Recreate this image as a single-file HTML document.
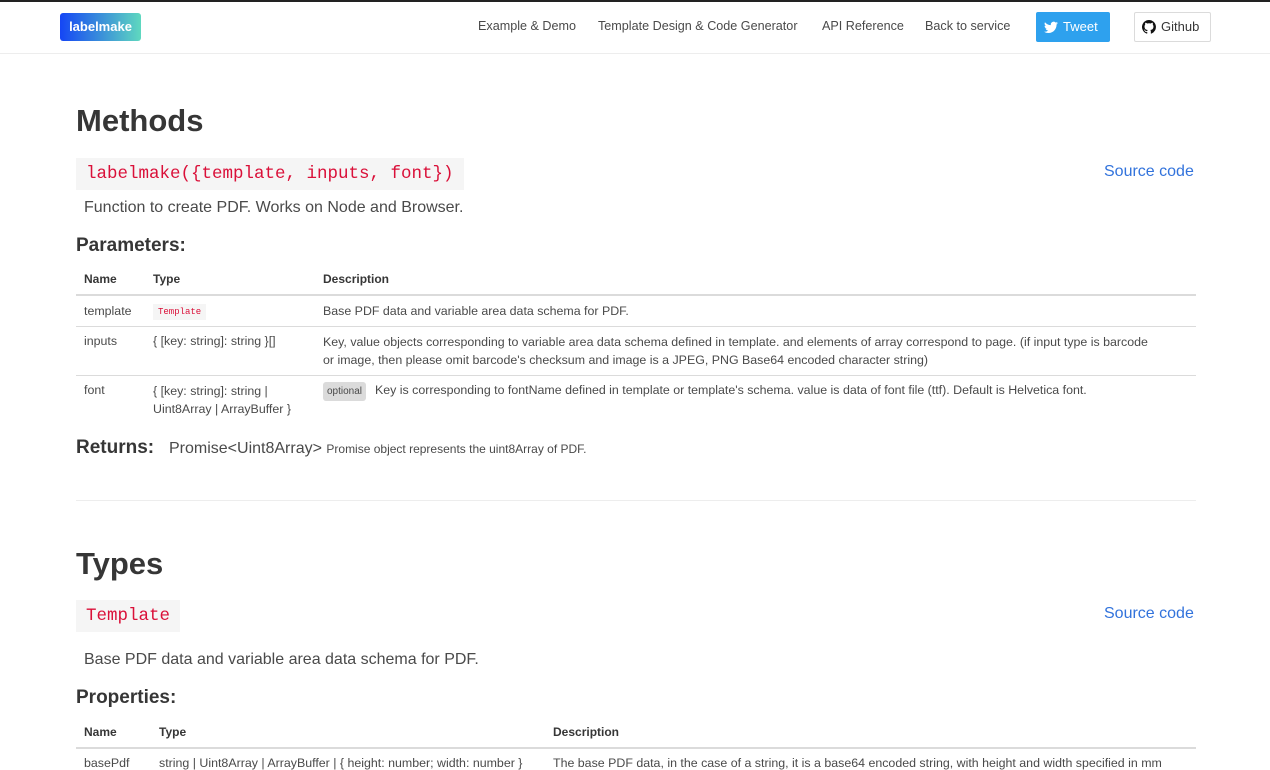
<!DOCTYPE html>
<html><head><meta charset="utf-8"><style>
*{margin:0;padding:0;box-sizing:border-box}
body{width:1270px;height:760px;overflow:hidden;background:#fff;font-family:"Liberation Sans",sans-serif;color:#4a4a4a;position:relative}
.a{position:absolute;white-space:nowrap}
.nav{position:absolute;left:0;top:0;width:1270px;height:54px;border-top:2px solid #222;border-bottom:1px solid #ededed}
.logo{left:60px;top:13px;width:81px;height:28px;border-radius:3px;background:linear-gradient(90deg,#1546f5,#5fd8bf);color:#fff;font-weight:bold;font-size:13px;line-height:28px;text-align:center}
.nl{font-size:12.6px;top:19px;color:#4a4a4a}
h1{position:absolute;font-size:31px;font-weight:600;color:#363636}
.code{position:absolute;background:#f5f5f5;color:#da1039;font-family:"Liberation Mono",monospace;font-size:17.5px;height:32px;line-height:32px;padding:0 10px}
.src{position:absolute;color:#3273dc;font-size:16px}
.t16{font-size:16px}
h3{position:absolute;font-size:19px;font-weight:600;color:#363636}
.th{font-size:12px;font-weight:bold;color:#363636}
.td{font-size:12.4px;color:#4a4a4a}
.ln{position:absolute;left:76px;width:1120px;height:1px;background:#dbdbdb}
</style></head><body>
<div class="nav"></div>
<div class="a logo">labelmake</div>
<div class="a nl" style="left:478px">Example &amp; Demo</div>
<div class="a nl" style="left:598px">Template Design &amp; Code Generator</div>
<div class="a nl" style="left:822px">API Reference</div>
<div class="a nl" style="left:925px">Back to service</div>
<div class="a" style="left:1036px;top:12px;width:74px;height:30px;background:#2ea1ee;border-radius:2px;color:#fff;font-size:13px;line-height:30px;padding-left:27px">
<svg style="position:absolute;left:8px;top:9px" width="14" height="13" viewBox="0 0 24 20"><path fill="#fff" d="M24 2.4a10 10 0 0 1-2.8.8A5 5 0 0 0 23.3.4a10 10 0 0 1-3.1 1.2A4.9 4.9 0 0 0 11.8 6 14 14 0 0 1 1.7.9a4.9 4.9 0 0 0 1.5 6.6A4.9 4.9 0 0 1 1 6.9a4.9 4.9 0 0 0 3.9 4.8 5 5 0 0 1-2.2.1 4.9 4.9 0 0 0 4.6 3.4A9.9 9.9 0 0 1 0 17.3 14 14 0 0 0 7.5 19.5c9 0 14-7.5 14-14v-.6A10 10 0 0 0 24 2.4z"/></svg>Tweet</div>
<div class="a" style="left:1134px;top:12px;width:77px;height:30px;border:1px solid #dbdbdb;border-radius:2px;color:#363636;font-size:13px;line-height:28px;padding-left:26px">
<svg style="position:absolute;left:7px;top:7px" width="14" height="14" viewBox="0 0 16 16"><path fill="#111" d="M8 0a8 8 0 0 0-2.5 15.6c.4 0 .5-.2.5-.4v-1.5c-2.2.5-2.7-1-2.7-1-.4-.9-.9-1.200-.9-1.2-.7-.5.1-.5.1-.5.8.1 1.2.8 1.2.8.7 1.3 1.9.9 2.3.7.1-.5.3-.9.5-1.1-1.8-.2-3.6-.9-3.6-4 0-.9.3-1.6.8-2.1-.1-.2-.4-1 .1-2.1 0 0 .7-.2 2.2.8a7.5 7.5 0 0 1 4 0c1.5-1 2.2-.8 2.2-.8.4 1.1.2 1.9.1 2.1.5.6.8 1.3.8 2.1 0 3.1-1.9 3.800-3.6 4 .3.3.6.8.6 1.5v2.2c0 .2.1.5.6.4A8 8 0 0 0 8 0z"/></svg>Github</div>

<h1 style="left:76px;top:103px">Methods</h1>
<div class="code" style="left:76px;top:158px">labelmake({template, inputs, font})</div>
<div class="src a" style="left:1104px;top:163px">Source code</div>
<div class="a t16" style="left:84px;top:199px">Function to create PDF. Works on Node and Browser.</div>
<h3 style="left:76px;top:235px">Parameters:</h3>
<div class="a th" style="left:84px;top:272px">Name</div>
<div class="a th" style="left:153px;top:272px">Type</div>
<div class="a th" style="left:323px;top:272px">Description</div>
<div class="ln" style="top:294px;height:2px"></div>
<div class="a td" style="left:84px;top:304px">template</div>
<div class="a" style="left:153px;top:304px;background:#f5f5f5;color:#da1039;font-family:'Liberation Mono',monospace;font-size:9px;padding:3px 5px">Template</div>
<div class="a td" style="left:323px;top:304px">Base PDF data and variable area data schema for PDF.</div>
<div class="ln" style="top:326px"></div>
<div class="a td" style="left:84px;top:334px">inputs</div>
<div class="a td" style="left:153px;top:334px">{ [key: string]: string }[]</div>
<div class="a td" style="left:323px;top:333px;line-height:18px">Key, value objects corresponding to variable area data schema defined in template. and elements of array correspond to page. (if input type is barcode<br>or image, then please omit barcode's checksum and image is a JPEG, PNG Base64 encoded character string)</div>
<div class="ln" style="top:375px"></div>
<div class="a td" style="left:84px;top:383px">font</div>
<div class="a td" style="left:153px;top:382px;line-height:18px">{ [key: string]: string |<br>Uint8Array | ArrayBuffer }</div>
<div class="a" style="left:323px;top:382px;background:#dbdbdb;border-radius:3px;font-size:10px;padding:4px 4px;color:#4a4a4a">optional</div>
<div class="a td" style="left:375px;top:383px">Key is corresponding to fontName defined in template or template's schema. value is data of font file (ttf). Default is Helvetica font.</div>
<h3 style="left:76px;top:437px">Returns:</h3>
<div class="a" style="left:169px;top:440px;font-size:16px">Promise&lt;Uint8Array&gt; <span style="font-size:12px">Promise object represents the uint8Array of PDF.</span></div>
<div class="ln" style="top:500px;background:#ededed"></div>

<h1 style="left:76px;top:546px">Types</h1>
<div class="code" style="left:76px;top:600px">Template</div>
<div class="src a" style="left:1104px;top:605px">Source code</div>
<div class="a t16" style="left:84px;top:651px">Base PDF data and variable area data schema for PDF.</div>
<h3 style="left:76px;top:687px">Properties:</h3>
<div class="a th" style="left:84px;top:725px">Name</div>
<div class="a th" style="left:159px;top:725px">Type</div>
<div class="a th" style="left:553px;top:725px">Description</div>
<div class="ln" style="top:747px;height:2px"></div>
<div class="a td" style="left:84px;top:756px">basePdf</div>
<div class="a td" style="left:159px;top:756px">string | Uint8Array | ArrayBuffer | { height: number; width: number }</div>
<div class="a td" style="left:553px;top:756px">The base PDF data, in the case of a string, it is a base64 encoded string, with height and width specified in mm</div>
</body></html>
